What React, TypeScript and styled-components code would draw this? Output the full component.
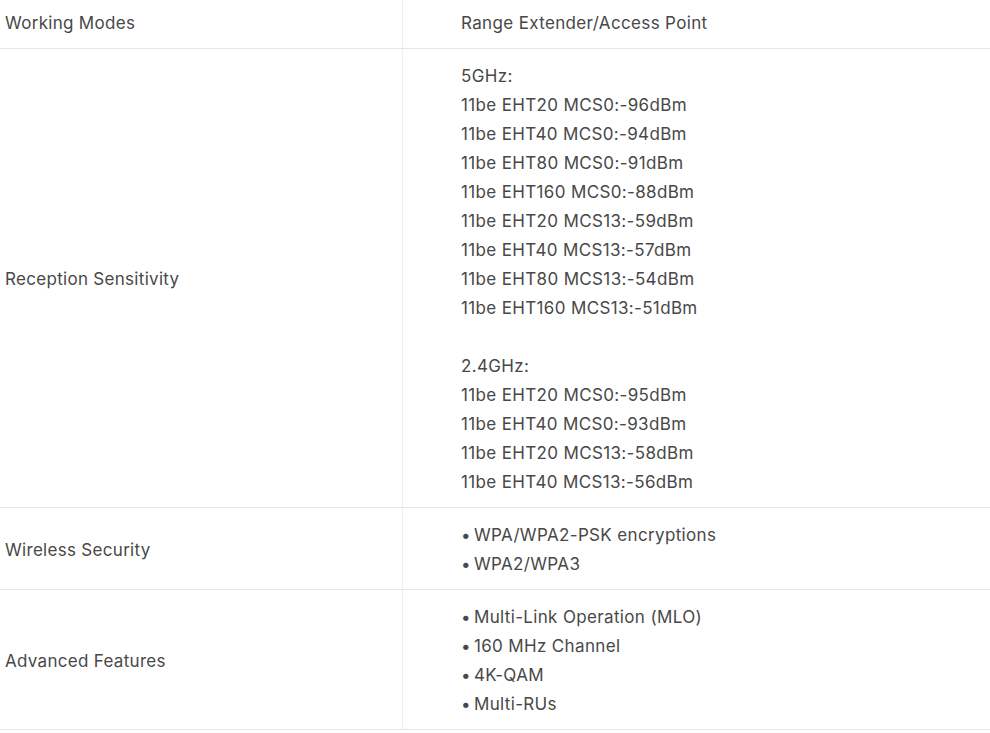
import React from "react";
import styled, { createGlobalStyle } from "styled-components";

const Global = createGlobalStyle`
  html, body { margin: 0; padding: 0; background: #fff; }
  body { font-family: Inter, "Noto Sans", sans-serif; color: #484848; }
`;

const Table = styled.div`
  width: 990px;
  margin-top: -4px;
`;

const Row = styled.div`
  display: grid;
  grid-template-columns: 403px 1fr;
  border-bottom: 1px solid #e6e6e6;
`;

const Label = styled.div`
  display: flex;
  align-items: center;
  padding: 13px 0 10px 5px;
  border-right: 1px solid #efefef;
  font-size: 17px;
  line-height: 29px;
  letter-spacing: 0.3px;
`;

const Value = styled.div`
  padding: 13px 0 10px 58px;
  font-size: 17px;
  line-height: 29px;
  letter-spacing: 0.35px;
`;

const Line = styled.div`
  height: 29px;
  white-space: nowrap;
`;

const Bullet = styled.span`
  margin-right: 3px;
`;

type RowData = { label: string; lines: string[]; bullets?: boolean };

const rows: RowData[] = [
  { label: "Working Modes", lines: ["Range Extender/Access Point"] },
  {
    label: "Reception Sensitivity",
    lines: [
      "5GHz:",
      "11be EHT20 MCS0:-96dBm",
      "11be EHT40 MCS0:-94dBm",
      "11be EHT80 MCS0:-91dBm",
      "11be EHT160 MCS0:-88dBm",
      "11be EHT20 MCS13:-59dBm",
      "11be EHT40 MCS13:-57dBm",
      "11be EHT80 MCS13:-54dBm",
      "11be EHT160 MCS13:-51dBm",
      "",
      "2.4GHz:",
      "11be EHT20 MCS0:-95dBm",
      "11be EHT40 MCS0:-93dBm",
      "11be EHT20 MCS13:-58dBm",
      "11be EHT40 MCS13:-56dBm",
    ],
  },
  {
    label: "Wireless Security",
    bullets: true,
    lines: ["WPA/WPA2-PSK encryptions", "WPA2/WPA3"],
  },
  {
    label: "Advanced Features",
    bullets: true,
    lines: ["Multi-Link Operation (MLO)", "160 MHz Channel", "4K-QAM", "Multi-RUs"],
  },
];

export default function App() {
  return (
    <>
      <Global />
      <Table>
        {rows.map((r) => (
          <Row key={r.label}>
            <Label>{r.label}</Label>
            <Value>
              {r.lines.map((l, i) => (
                <Line key={i}>
                  {r.bullets && <Bullet>•</Bullet>}
                  {l}
                </Line>
              ))}
            </Value>
          </Row>
        ))}
      </Table>
    </>
  );
}
